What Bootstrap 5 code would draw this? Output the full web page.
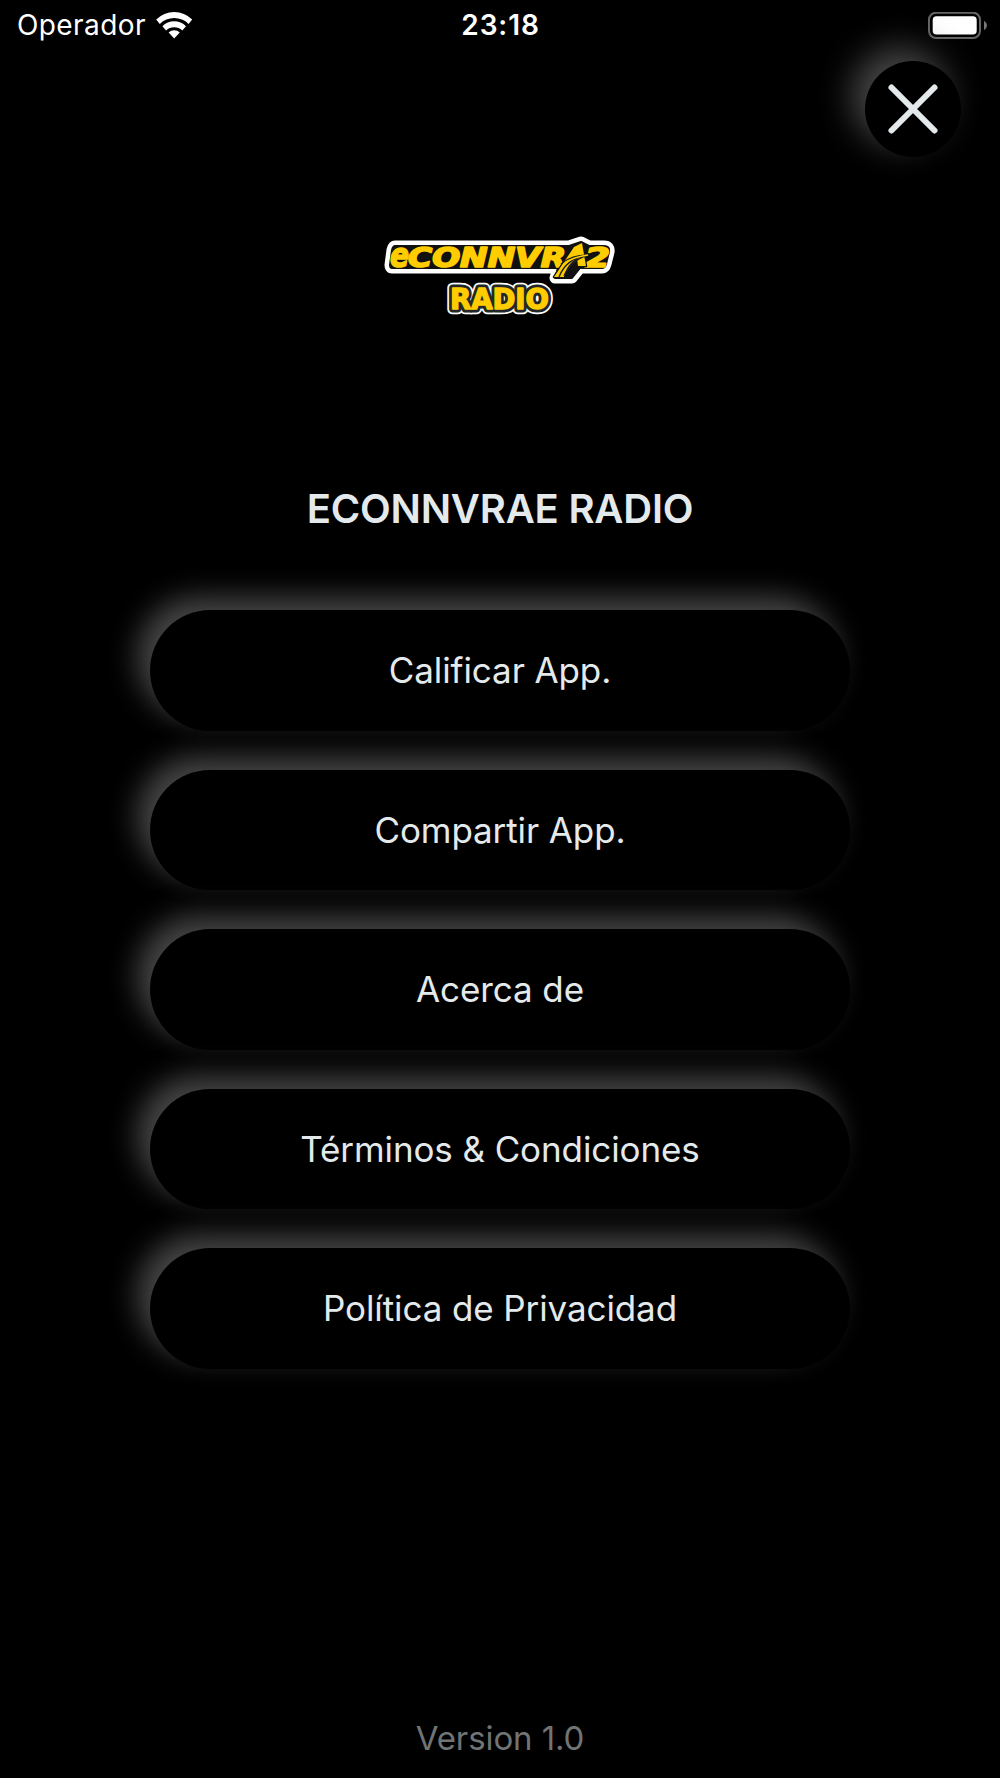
<!DOCTYPE html>
<html lang="es">
<head>
<meta charset="utf-8">
<meta name="viewport" content="width=device-width, initial-scale=1">
<title>ECONNVRAE RADIO</title>
<link href="https://cdn.jsdelivr.net/npm/bootstrap@5.3.0/dist/css/bootstrap.min.css" rel="stylesheet">
<style>
body{background:#000;color:#e4eaec;font-family:Inter,"Liberation Sans",sans-serif}
.screen{height:1778px;overflow:hidden}
.status{height:50px;padding:0 12px 0 17px;color:#fff;font-size:28px;line-height:51px}
.carrier{letter-spacing:.4px}
.clock{font-size:28px;font-weight:600;letter-spacing:.9px;margin-right:4px}
.round-close{width:96px;height:96px;margin:10.5px 39px 0 0;background:#000;border:0;box-shadow:-13px -13px 34px #484848}
.logo{margin-top:68.5px;height:100px}
.station{font-size:40px;font-weight:600;line-height:50px;margin-top:159px;letter-spacing:-.2px}
.menu{width:700px;margin-top:76px;gap:39px}
.menu .btn{height:120.5px;padding:0;font-size:35px;letter-spacing:-.1px;line-height:120px;background:#000;color:#e4eaec;border:0;box-shadow:-13px -13px 29px #464646}
.version{font-size:33px;line-height:42px;letter-spacing:-.1px;color:#707474;margin-bottom:19px}
</style>
<script src="https://cdn.jsdelivr.net/npm/bootstrap@5.3.0/dist/js/bootstrap.bundle.min.js"></script>
</head>
<body>
<main class="screen d-flex flex-column align-items-center">
  <header class="status row g-0 w-100 flex-shrink-0">
    <div class="col d-flex align-items-center"><span class="carrier">Operador</span>
      <svg class="ms-2" width="40" height="30" viewBox="0 0 40 30" fill="#fff" aria-label="Wi-Fi"><path d="M2.2 8.5a25.4 25.4 0 0 1 36 0l-3.6 4.4a20.7 20.7 0 0 0-28.8 0z"/><path d="M8.4 15.2a16.5 16.5 0 0 1 23.6 0l-3.7 4.4a11.6 11.6 0 0 0-16.2 0z"/><path d="M14.6 21.6a7.7 7.7 0 0 1 11.2 0l-5.6 6z"/></svg>
    </div>
    <div class="col-auto clock">23:18</div>
    <div class="col d-flex align-items-center justify-content-end">
      <svg width="60" height="28" viewBox="0 0 60 28" aria-label="Batería"><rect x="1" y=".7" width="51" height="25.3" rx="7" fill="none" stroke="#666" stroke-width="2"/><rect x="4.7" y="4.2" width="44" height="18.3" rx="3.8" fill="#fff"/><path d="M56 8.7q3 2 3 4.8t-3 4.8z" fill="#777"/></svg>
    </div>
  </header>
  <button class="round-close rounded-circle align-self-end d-flex align-items-center justify-content-center p-0 flex-shrink-0" aria-label="Cerrar">
    <svg width="54" height="54" viewBox="0 0 54 54"><path d="M5.5 5.5l43 43M48.5 5.5l-43 43" stroke="#e4eaec" stroke-width="6" stroke-linecap="round"/></svg>
  </button>
  <svg class="logo flex-shrink-0" width="250" height="100" viewBox="0 0 250 100" font-family="DejaVu Sans, sans-serif" font-weight="700" stroke-linejoin="round">
    <defs>
      <g id="name" font-style="italic"><text x="15" y="41.5" font-size="34" textLength="19" lengthAdjust="spacingAndGlyphs">e</text><text x="33" y="41.5" font-size="27" textLength="158" lengthAdjust="spacingAndGlyphs">CONNVR</text><text x="210" y="41.5" font-size="27" textLength="25" lengthAdjust="spacingAndGlyphs">2</text></g>
      <path id="peak" d="M179 52l20-30 8-4 4 23h-8l-1-8c-7 5-11 10-13 19z"/>
      <path id="plate" d="M20 21h174l12-4 8 4h15q6 0 5 6l-3 12q-1 4-4 4h-22l-8 10h-17l3-10H17q-2 0-2-3l2-15q1-4 3-4z"/>
      <text id="radio" x="75" y="84" font-size="27.5" textLength="99" lengthAdjust="spacingAndGlyphs">RADIO</text>
    </defs>
    <use href="#plate" fill="#fff" stroke="#fff" stroke-width="11"/>
    <use href="#plate" fill="#111" stroke="#111" stroke-width="2"/>
    <g fill="#fc0" stroke="#fc0" stroke-width="1.7"><use href="#name"/></g>
    <use href="#peak" fill="#fc0" stroke="#111" stroke-width="2.5"/>
    <use href="#peak" fill="#fc0"/>
    <path d="M184 52c5-13 16-20 29-22-14 5-19 10-24 21M186 39c8-7 17-9 28-9" fill="none" stroke="#222" stroke-width="1.4"/>
    <path d="M190 38c7-5 15-7 23-8" fill="none" stroke="#fc0" stroke-width="1.6"/>
    <use href="#radio" fill="#fff" stroke="#fff" stroke-width="10.5"/>
    <use href="#radio" fill="#222728" stroke="#222728" stroke-width="7"/>
    <use href="#radio" fill="#fc0" stroke="#fc0" stroke-width="1.4"/>
  </svg>
  <h1 class="station mb-0 text-center">ECONNVRAE RADIO</h1>
  <nav class="menu d-flex flex-column flex-shrink-0">
    <button class="btn rounded-pill">Calificar App.</button>
    <button class="btn rounded-pill">Compartir App.</button>
    <button class="btn rounded-pill">Acerca de</button>
    <button class="btn rounded-pill">Términos &amp; Condiciones</button>
    <button class="btn rounded-pill">Política de Privacidad</button>
  </nav>
  <footer class="version mt-auto">Version 1.0</footer>
</main>
</body>
</html>
